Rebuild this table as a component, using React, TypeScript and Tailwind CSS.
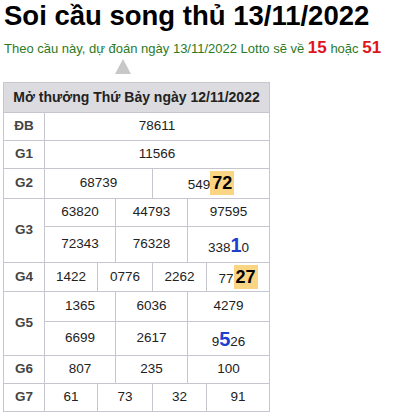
const Hl = ({ children }: { children: React.ReactNode }) => (
  <span className="inline-block bg-[#fad584] px-[2px] text-[18px] font-bold leading-[24px] text-black">{children}</span>
);

const Big = ({ children }: { children: React.ReactNode }) => (
  <span className="text-[20px] font-bold text-[#1d3fce]">{children}</span>
);

const label = "border border-[#c6c6ce] text-center font-bold text-[#444]";
const cell = "border border-[#c6c6ce] text-center";

export default function App() {
  return (
    <div className="bg-white font-['Liberation_Sans',Arial,sans-serif] text-[#222]">
      <h1 className="pl-[4px] pt-[2px] text-[27.5px] font-bold leading-[27px] text-black">
        Soi cầu song thủ 13/11/2022
      </h1>
      <p className="mt-[10px] whitespace-nowrap pl-[4px] text-[13px] leading-[18px] text-[#2c7a1f]">
        Theo cầu này, dự đoán ngày 13/11/2022 Lotto sẽ về{" "}
        <span className="text-[17px] font-bold text-[#e0141c]">15</span> hoặc{" "}
        <span className="text-[17px] font-bold text-[#e0141c]">51</span>
      </p>
      <div className="ml-[115px] mt-[1px] h-0 w-0 border-x-[8px] border-b-[15px] border-x-transparent border-b-[#c8c8c8]" />
      <table className="ml-[3px] mt-[8px] w-[266px] table-fixed border-collapse text-[13.5px]">
        <colgroup>
          <col className="w-[41px]" />
          <col className="w-[53px]" />
          <col className="w-[18px]" />
          <col className="w-[37px]" />
          <col className="w-[35px]" />
          <col className="w-[19px]" />
          <col className="w-[63px]" />
        </colgroup>
        <tbody>
          <tr className="h-[30px] bg-[#dcdce0]">
            <td colSpan={7} className="border border-[#c6c6ce] text-center text-[14px] font-bold text-[#222]">
              Mở thưởng Thứ Bảy ngày 12/11/2022
            </td>
          </tr>
          <tr className="h-[28px]">
            <td className={label}>ĐB</td>
            <td colSpan={6} className={cell}>78611</td>
          </tr>
          <tr className="h-[28px]">
            <td className={label}>G1</td>
            <td colSpan={6} className={cell}>11566</td>
          </tr>
          <tr className="h-[30px]">
            <td className={label}>G2</td>
            <td colSpan={3} className={cell}>68739</td>
            <td colSpan={3} className={cell}>549<Hl>72</Hl></td>
          </tr>
          <tr className="h-[28px]">
            <td rowSpan={2} className={label}>G3</td>
            <td colSpan={2} className={cell}>63820</td>
            <td colSpan={2} className={cell}>44793</td>
            <td colSpan={2} className={cell}>97595</td>
          </tr>
          <tr className="h-[36px]">
            <td colSpan={2} className={cell}>72343</td>
            <td colSpan={2} className={cell}>76328</td>
            <td colSpan={2} className={cell}>338<Big>1</Big>0</td>
          </tr>
          <tr className="h-[29px]">
            <td className={label}>G4</td>
            <td className={cell}>1422</td>
            <td colSpan={2} className={cell}>0776</td>
            <td colSpan={2} className={cell}>2262</td>
            <td className={cell}>77<Hl>27</Hl></td>
          </tr>
          <tr className="h-[30px]">
            <td rowSpan={2} className={label}>G5</td>
            <td colSpan={2} className={cell}>1365</td>
            <td colSpan={2} className={cell}>6036</td>
            <td colSpan={2} className={cell}>4279</td>
          </tr>
          <tr className="h-[34px]">
            <td colSpan={2} className={cell}>6699</td>
            <td colSpan={2} className={cell}>2617</td>
            <td colSpan={2} className={cell}>9<Big>5</Big>26</td>
          </tr>
          <tr className="h-[28px]">
            <td className={label}>G6</td>
            <td colSpan={2} className={cell}>807</td>
            <td colSpan={2} className={cell}>235</td>
            <td colSpan={2} className={cell}>100</td>
          </tr>
          <tr className="h-[28px]">
            <td className={label}>G7</td>
            <td className={cell}>61</td>
            <td colSpan={2} className={cell}>73</td>
            <td colSpan={2} className={cell}>32</td>
            <td className={cell}>91</td>
          </tr>
        </tbody>
      </table>
    </div>
  );
}
